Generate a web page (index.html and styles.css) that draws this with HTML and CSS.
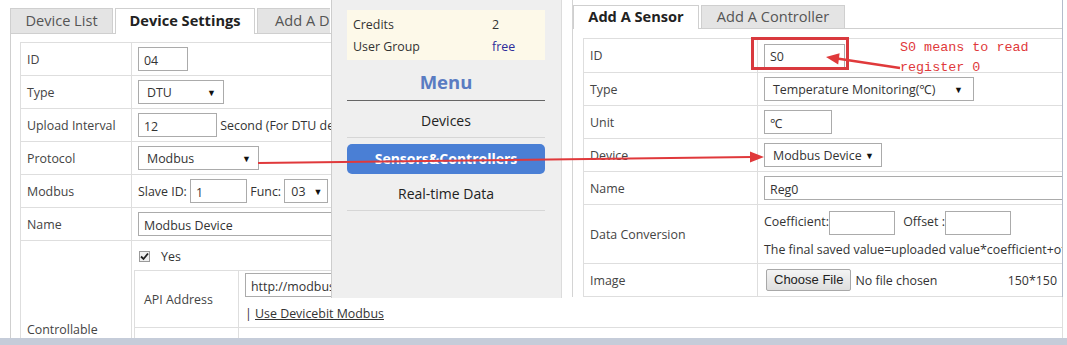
FILE: index.html
```html
<!DOCTYPE html>
<html>
<head>
    <meta charset="UTF-8">
    <title>Sensors &amp; Controllers</title>
    <link rel="stylesheet" href="styles.css">
</head>
<body>
<div class="screen">

    <div class="win-device">
        <div class="tabs">
            <div class="tab tab-list">Device List</div>
            <div class="tab tab-settings active">Device Settings</div>
            <div class="tab tab-add">Add A D</div>
        </div>
        <div class="tab-body">
            <table class="form form-device">
                <tr><td class="label">ID</td><td><input class="input w-id" value="04"></td></tr>
                <tr><td class="label">Type</td><td><span class="select w-type">DTU<i>&#9660;</i></span></td></tr>
                <tr><td class="label">Upload Interval</td><td><input class="input w-interval" value="12"> <span class="hint">Second (For DTU devices)</span></td></tr>
                <tr><td class="label">Protocol</td><td><span class="select w-protocol">Modbus<i>&#9660;</i></span></td></tr>
                <tr><td class="label">Modbus</td><td><span class="hint">Slave ID:</span> <input class="input w-slave" value="1"> <span class="hint">Func:</span> <span class="select w-func">03<i>&#9660;</i></span></td></tr>
                <tr><td class="label">Name</td><td><input class="input w-name" value="Modbus Device"></td></tr>
                <tr class="row-tall">
                    <td class="label">Controllable</td>
                    <td class="cell-nested">
                        <div class="check-line"><span class="checkbox"><svg width="9" height="9" viewBox="0 0 9 9"><path d="M1 4.5 L3.5 7 L8 1.5" fill="none" stroke="#222" stroke-width="1.8"/></svg></span>Yes</div>
                        <table class="form form-nested">
                            <tr class="row-api">
                                <td class="label">API Address</td>
                                <td class="api-cell">
                                    <input class="input w-api" value="http://modbus.devicebit.com/api">
                                    <div class="api-link">| <a href="#">Use Devicebit Modbus</a></div>
                                </td>
                            </tr>
                            <tr><td class="label">Internet</td><td></td></tr>
                        </table>
                    </td>
                </tr>
            </table>
        </div>
    </div>

    <div class="win-menu">
        <div class="account">
            <div class="account-row"><span class="account-key">Credits</span><span>2</span></div>
            <div class="account-row"><span class="account-key">User Group</span><span class="free">free</span></div>
        </div>
        <div class="menu-title">Menu</div>
        <div class="menu-item">Devices</div>
        <div class="menu-item current">Sensors&amp;Controllers</div>
        <div class="menu-item">Real-time Data</div>
    </div>

    <div class="win-sensor">
        <div class="sensor-box">
            <div class="tabs">
                <div class="tab tab-sensor active">Add A Sensor</div>
                <div class="tab tab-controller">Add A Controller</div>
            </div>
            <div class="sensor-body">
                <table class="form form-sensor">
                    <colgroup><col class="col-label"><col></colgroup>
                    <tr class="row-id"><td class="label">ID</td><td><input class="input w-sid" value="S0"></td></tr>
                    <tr><td class="label">Type</td><td><span class="select w-stype">Temperature Monitoring(℃)<i>&#9660;</i></span></td></tr>
                    <tr><td class="label">Unit</td><td><input class="input w-unit" value="℃"></td></tr>
                    <tr><td class="label">Device</td><td><span class="select w-device">Modbus Device<i>&#9660;</i></span></td></tr>
                    <tr><td class="label">Name</td><td><input class="input w-sname" value="Reg0"></td></tr>
                    <tr class="row-conv">
                        <td class="label">Data Conversion</td>
                        <td>
                            <div class="conv-line">Coefficient:<input class="input w-coef"> Offset :<input class="input w-coef"></div>
                            <div class="conv-note">The final saved value=uploaded value*coefficient+offset</div>
                        </td>
                    </tr>
                    <tr>
                        <td class="label">Image</td>
                        <td><div class="file-line"><span class="file-btn">Choose File</span><span class="file-name">No file chosen</span><span class="file-size">150*150</span></div></td>
                    </tr>
                    <tr><td class="label">&nbsp;</td><td></td></tr>
                </table>
            </div>
        </div>
    </div>

    <svg class="marks" width="1067" height="345">
        <line x1="258" y1="163" x2="752" y2="157.1" stroke="#e0393b" stroke-width="2"/>
        <polygon points="764,157 750,151.5 750,162.5" fill="#e0393b"/>
        <rect x="752.5" y="38.5" width="95" height="30" fill="none" stroke="#d9393e" stroke-width="3"/>
        <line x1="900" y1="68" x2="837" y2="58.6" stroke="#e0393b" stroke-width="2.5"/>
        <polygon points="826,57 839.6,53.2 838.2,64.4" fill="#e0393b"/>
    </svg>
    <div class="note">S0 means to read<br>register 0</div>

    <div class="frame-bottom"></div>
</div>
</body>
</html>
```

FILE: styles.css
```css
body {
    margin: 0;
    background-color: #ffffff;
    font-family: "Open Sans", "Noto Sans", sans-serif;
    font-size: 12.4px;
    color: #333;
}
.screen {
    position: relative;
    width: 1067px;
    height: 345px;
    overflow: hidden;
    background-color: #fff;
}

/* tabs */
.tabs {
    display: flex;
    align-items: flex-end;
}
.tab {
    box-sizing: border-box;
    height: 25px;
    line-height: 23px;
    font-size: 14.6px;
    text-align: center;
    color: #555;
    background-color: #e4e4e4;
    border: 1px solid #cfcfcf;
    border-bottom: none;
    margin-right: 2px;
    white-space: nowrap;
}
.tab.active {
    background-color: #fff;
    color: #222;
    font-weight: bold;
    height: 26px;
    margin-bottom: -1px;
}

/* base window: device settings */
.win-device {
    padding: 8px 0 0 10px;
}
.tab-list { width: 103px; }
.tab-settings { width: 140px; }
.tab-add {
    width: 73px;
    text-align: left;
    padding-left: 17px;
    overflow: hidden;
    border-right: none;
}
.tab-body {
    border-top: 1px solid #cfcfcf;
    border-left: 1px solid #cfcfcf;
    padding: 8px 0 0 9px;
    height: 320px;
}

/* form tables */
.form {
    border-collapse: collapse;
    font-size: 12.4px;
    color: #333;
}
.form td {
    border: 1px solid #dedede;
    height: 32px;
    padding: 0 6px;
    white-space: nowrap;
}
.form td.label {
    color: #444;
}
.form-device {
    width: 1043px;
}
.form-device > tbody > tr > td.label {
    width: 98px;
}
.row-tall > td {
    height: 120px;
    vertical-align: top;
}
.row-tall > td.label {
    vertical-align: top;
    padding-top: 80px;
}
.form-device td.cell-nested {
    padding: 0 0 0 2px;
}
.check-line {
    height: 27px;
    display: flex;
    align-items: center;
    padding: 2px 0 0 5px;
}
.checkbox {
    display: inline-flex;
    align-items: center;
    justify-content: center;
    box-sizing: border-box;
    width: 11px;
    height: 11px;
    border: 1px solid #9a9a9a;
    background-color: #f0f0f0;
    margin-right: 11px;
}
.form-nested {
    width: 100%;
    border-left: 1px solid #dedede;
}
.form-nested td.label {
    width: 88px;
    padding-left: 9px;
}
.row-api td {
    height: 56px;
}
.form-nested td.api-cell {
    height: 54px;
    vertical-align: top;
    padding-top: 2px;
}
.form-nested td {
    border-right: none;
}
.api-link {
    margin-top: 8px;
}
.api-link a {
    color: #333;
    text-decoration: underline;
}

/* inputs */
.input {
    box-sizing: border-box;
    height: 24px;
    border: 1px solid #ababab;
    padding: 2px 5px 0;
    font-family: "Open Sans", "Noto Sans", sans-serif;
    font-size: 12.4px;
    color: #333;
    vertical-align: middle;
    background-color: #fff;
}
.select {
    display: inline-flex;
    align-items: center;
    justify-content: space-between;
    box-sizing: border-box;
    height: 24px;
    border: 1px solid #ababab;
    padding: 1px 7px 0 8px;
    vertical-align: middle;
    background-color: #fff;
    color: #333;
}
.select i {
    font-style: normal;
    font-size: 9px;
    color: #111;
}
.hint { vertical-align: middle; }
.w-id { width: 50px; }
.w-type { width: 86px; }
.w-interval { width: 79px; }
.w-protocol { width: 121px; }
.w-slave { width: 57px; }
.w-func { width: 44px; padding-left: 6px; padding-right: 5px; }
.w-name { width: 330px; }
.w-api { width: 300px; display: block; }

/* middle window: menu */
.win-menu {
    position: absolute;
    left: 331px;
    top: 0;
    box-sizing: border-box;
    width: 231px;
    height: 298px;
    background-color: #efefef;
    border-left: 1px solid #cdcdcd;
    border-right: 1px solid #dcdcdc;
    padding: 10px 16px 0 15px;
}
.account {
    box-sizing: border-box;
    background-color: #fdf9e9;
    padding: 4px 6px 2px;
    height: 50px;
    font-size: 12.4px;
    color: #333;
}
.account-row {
    display: flex;
    height: 22px;
    line-height: 22px;
}
.account-key {
    width: 139px;
}
.free {
    color: #2d2d9a;
}
.menu-title {
    height: 40px;
    line-height: 44px;
    text-align: center;
    font-size: 18.5px;
    font-weight: bold;
    color: #5a7cc2;
    border-bottom: 1px solid #666;
}
.menu-item {
    height: 36px;
    line-height: 40px;
    text-align: center;
    font-size: 14px;
    color: #222;
    border-bottom: 1px solid #d6d6d6;
}
.menu-item.current {
    height: 30px;
    line-height: 30px;
    margin-top: 6px;
    background-color: #4a7fd5;
    color: #fff;
    font-weight: bold;
    border-radius: 5px;
    border-bottom: none;
}

/* right window: add a sensor */
.win-sensor {
    position: absolute;
    left: 562px;
    top: 0;
    width: 505px;
    height: 297px;
    background-color: #fff;
}
.sensor-box {
    box-sizing: border-box;
    margin-left: 10px;
    width: 491px;
    height: 297px;
    border-left: 1px solid #d4d4d4;
    border-right: 1px solid #b4bccb;
    padding-top: 5px;
    overflow: hidden;
}
.win-sensor .tab {
    height: 23px;
    line-height: 21px;
}
.win-sensor .tab.active {
    height: 24px;
}
.tab-sensor { width: 126px; }
.tab-controller { width: 144px; }
.sensor-body {
    border-top: 1px solid #cfcfcf;
    padding: 9px 0 0 10px;
}
.form-sensor {
    width: 481px;
    table-layout: fixed;
}
.form-sensor col.col-label {
    width: 174px;
}
.form-sensor td {
    overflow: hidden;
}
.row-id td {
    height: 33px;
}
.row-conv td {
    height: 57px;
    padding-top: 1px;
}
.conv-note {
    margin-top: 6px;
}
.w-sid { width: 81px; }
.w-stype { width: 210px; padding-right: 10px; }
.w-unit { width: 68px; }
.w-device { width: 118px; padding-right: 7px; }
.w-sname { width: 320px; }
.w-coef { width: 66px; margin-right: 5px; }
.file-line {
    display: flex;
    align-items: center;
}
.file-btn {
    box-sizing: border-box;
    height: 22px;
    line-height: 20px;
    padding: 0 7px;
    font-family: "Liberation Sans", Arial, sans-serif;
    font-size: 13px;
    color: #222;
    background: linear-gradient(#f4f4f4, #dedede);
    border: 1px solid #a8a8a8;
    border-radius: 2px;
    margin-left: 2px;
}
.file-name {
    margin-left: 4px;
}
.file-size {
    margin-left: auto;
}

/* annotations */
.marks {
    position: absolute;
    left: 0;
    top: 0;
    pointer-events: none;
}
.note {
    position: absolute;
    left: 900px;
    top: 38px;
    font-family: "Liberation Mono", "DejaVu Sans Mono", monospace;
    font-size: 13.4px;
    line-height: 20px;
    color: #e0393b;
}

/* window frame */
.frame-bottom {
    position: absolute;
    left: 0;
    right: 0;
    bottom: 0;
    height: 7px;
    background-color: #c5ccd9;
}
```
